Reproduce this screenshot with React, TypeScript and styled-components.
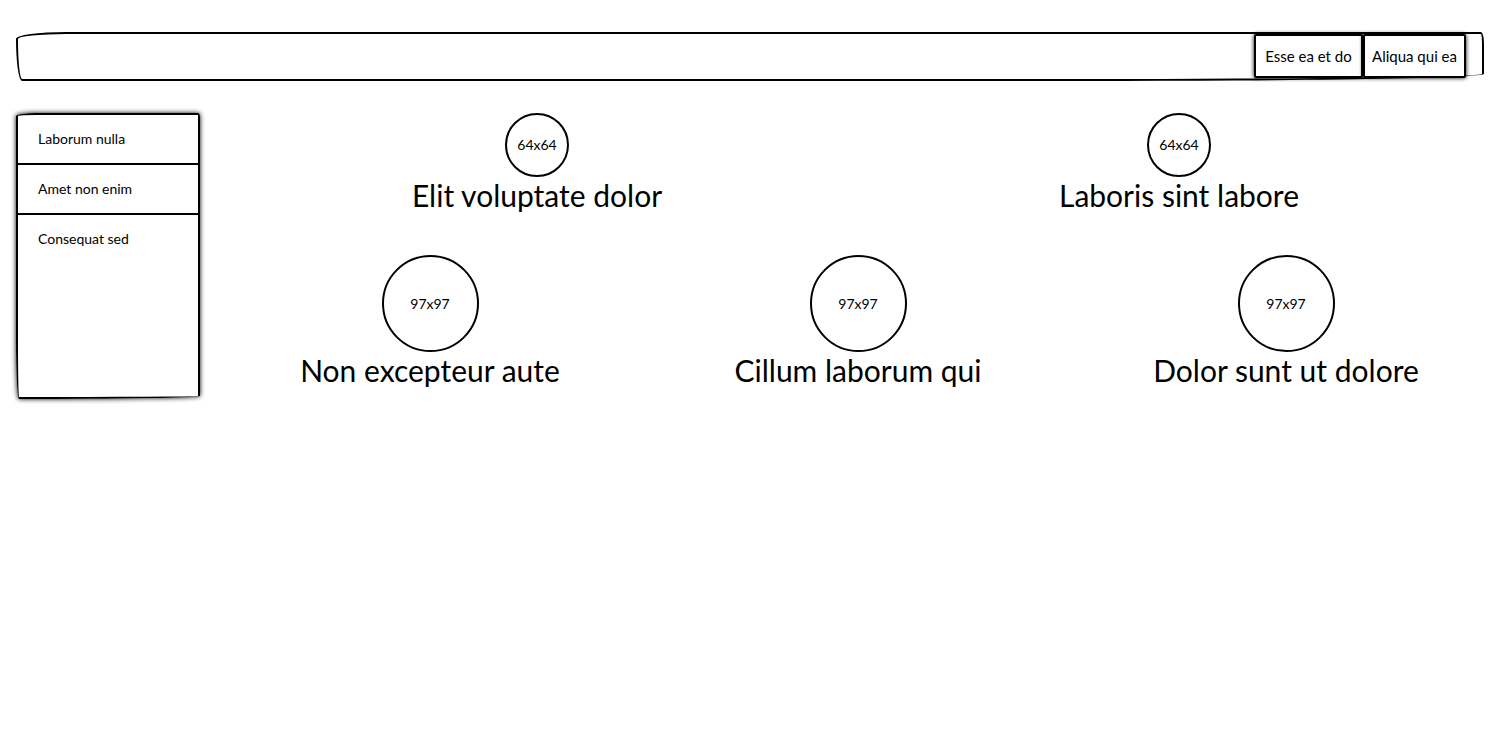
import React from 'react';
import styled, { createGlobalStyle } from 'styled-components';

const GlobalStyle = createGlobalStyle`
  * { box-sizing: border-box; }
  body {
    margin: 0;
    background: #fff;
    color: #000;
    font: 400 14px/24px Lato, "Liberation Sans", sans-serif;
  }
`;

const Page = styled.div`
  display: flex;
  flex-direction: column;
  gap: 32px;
  padding: 32px 0;
`;

const Header = styled.header`
  display: flex;
  justify-content: flex-end;
  height: 49px;
  margin: 0 16px;
  padding-right: 16px;
  border: 2px solid #000;
  border-radius: 50px 3px 400px 6px / 7px 12px 7px 42px;
`;

const HeaderButton = styled.button<{ $width: number }>`
  width: ${(p) => p.$width}px;
  height: 44px;
  padding: 0;
  border: 2px solid #000;
  border-radius: 2px;
  background: #fff;
  color: inherit;
  font: inherit;
  font-size: 15px;
  white-space: nowrap;
  box-shadow: 0 0 4px #000;
`;

const Body = styled.div`
  display: flex;
  align-items: flex-start;
  gap: 16px;
  padding-left: 16px;
`;

const Sidebar = styled.nav`
  flex: none;
  width: 184px;
  height: 286px;
  border: 2px solid #000;
  border-radius: 20px 2px 180px 3px / 3px 4px 3px 60px;
  box-shadow: 0 0 5px #000;
`;

const SideLink = styled.a`
  display: block;
  height: 50px;
  padding: 12px 20px;
  border-bottom: 2px solid #000;
  color: inherit;
  text-decoration: none;
  &:last-child { border-bottom: 0; }
`;

const Content = styled.main`
  flex: 1;
  display: flex;
  flex-direction: column;
  gap: 42px;
`;

const Row = styled.section`
  display: flex;
`;

const Card = styled.article`
  flex: 1;
  display: flex;
  flex-direction: column;
  align-items: center;
`;

const Circle = styled.div<{ $size: number }>`
  display: flex;
  align-items: center;
  justify-content: center;
  width: ${(p) => p.$size}px;
  height: ${(p) => p.$size}px;
  border: 2px solid #000;
  border-radius: 50%;
`;

const Title = styled.h2`
  margin: 0;
  font-size: 30px;
  font-weight: 400;
  line-height: 36px;
  white-space: nowrap;
`;

const actions = [
  { label: 'Esse ea et do', width: 109 },
  { label: 'Aliqua qui ea', width: 103 },
];
const links = ['Laborum nulla', 'Amet non enim', 'Consequat sed'];
const rows = [
  { size: 64, titles: ['Elit voluptate dolor', 'Laboris sint labore'] },
  { size: 97, titles: ['Non excepteur aute', 'Cillum laborum qui', 'Dolor sunt ut dolore'] },
];

export default function App() {
  return (
    <Page>
      <GlobalStyle />
      <Header>
        {actions.map((action) => (
          <HeaderButton type="button" key={action.label} $width={action.width}>
            {action.label}
          </HeaderButton>
        ))}
      </Header>
      <Body>
        <Sidebar>
          {links.map((label) => (
            <SideLink href="#" key={label}>{label}</SideLink>
          ))}
        </Sidebar>
        <Content>
          {rows.map((row) => (
            <Row key={row.size}>
              {row.titles.map((title) => (
                <Card key={title}>
                  <Circle $size={row.size}>{`${row.size}x${row.size}`}</Circle>
                  <Title>{title}</Title>
                </Card>
              ))}
            </Row>
          ))}
        </Content>
      </Body>
    </Page>
  );
}
